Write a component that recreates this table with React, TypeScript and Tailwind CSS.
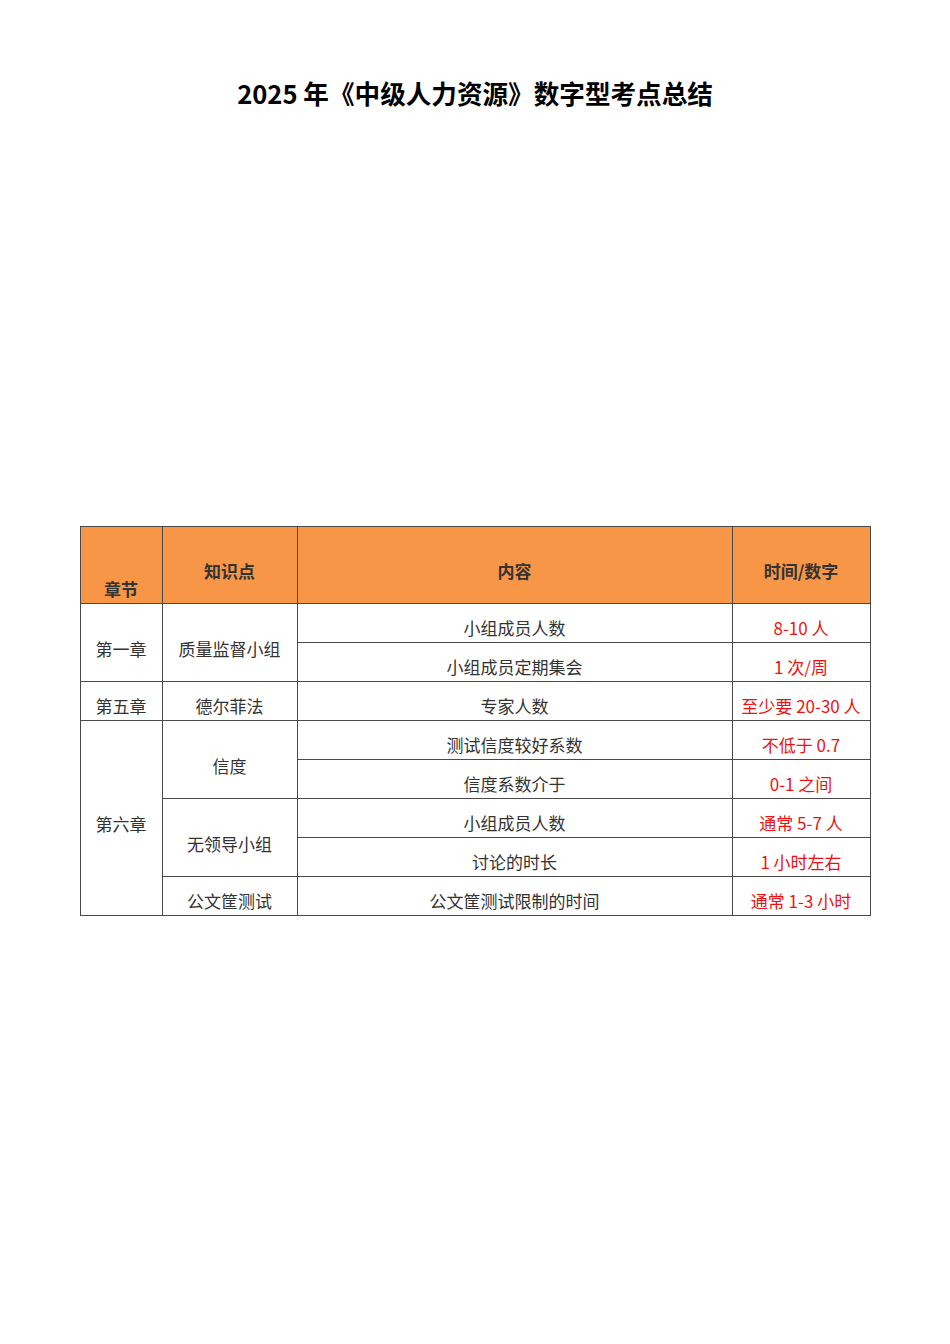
const FONT = { fontFamily: '"Noto Sans CJK SC", "Noto Sans", sans-serif' };

type Row = {
  chapter?: { text: string; span: number };
  point?: { text: string; span: number };
  content: string;
  value: string;
};

const ROWS: Row[] = [
  { chapter: { text: "第一章", span: 2 }, point: { text: "质量监督小组", span: 2 }, content: "小组成员人数", value: "8-10 人" },
  { content: "小组成员定期集会", value: "1 次/周" },
  { chapter: { text: "第五章", span: 1 }, point: { text: "德尔菲法", span: 1 }, content: "专家人数", value: "至少要 20-30 人" },
  { chapter: { text: "第六章", span: 5 }, point: { text: "信度", span: 2 }, content: "测试信度较好系数", value: "不低于 0.7" },
  { content: "信度系数介于", value: "0-1 之间" },
  { point: { text: "无领导小组", span: 2 }, content: "小组成员人数", value: "通常 5-7 人" },
  { content: "讨论的时长", value: "1 小时左右" },
  { point: { text: "公文筐测试", span: 1 }, content: "公文筐测试限制的时间", value: "通常 1-3 小时" },
];

function spanCell(text: string, span: number) {
  // single rows sit on the bottom, merged ones sit a bit under the middle
  if (span === 1) {
    return (
      <td className="border border-[#4a4a4a] text-center align-bottom pb-[3px] leading-[22px] whitespace-nowrap">
        {text}
      </td>
    );
  }
  return (
    <td rowSpan={span} className="border border-[#4a4a4a] text-center align-middle pt-[12px] leading-[22px] whitespace-nowrap">
      {text}
    </td>
  );
}

export default function App() {
  return (
    <div className="w-[950px] h-[1344px] bg-white" style={FONT}>
      <h1 className="pt-[76px] text-center text-[25.6px] leading-[34px] font-bold text-black">
        2025 年《中级人力资源》数字型考点总结
      </h1>

      <div className="mt-[416px] flex justify-center">
        <table className="w-[790px] border-collapse table-fixed text-[17px] text-[#333]">
          <colgroup>
            <col className="w-[82px]" />
            <col className="w-[135px]" />
            <col className="w-[435px]" />
            <col className="w-[138px]" />
          </colgroup>
          <thead>
            <tr className="h-[77px] bg-[#f79646] font-bold text-[#333]">
              <th className="border border-[#4a4a4a] align-bottom pb-[3px] leading-[22px]">章节</th>
              <th className="border border-[#4a4a4a] align-middle pt-[12px] leading-[22px]">知识点</th>
              <th className="border border-[#4a4a4a] align-middle pt-[12px] leading-[22px]">内容</th>
              <th className="border border-[#4a4a4a] align-middle pt-[12px] leading-[22px]">时间/数字</th>
            </tr>
          </thead>
          <tbody>
            {ROWS.map((row, i) => (
              <tr key={i} className="h-[39px]">
                {row.chapter && spanCell(row.chapter.text, row.chapter.span)}
                {row.point && spanCell(row.point.text, row.point.span)}
                <td className="border border-[#4a4a4a] text-center align-bottom pb-[3px] leading-[22px]">
                  {row.content}
                </td>
                <td className="border border-[#4a4a4a] text-center align-bottom pb-[3px] leading-[22px] text-[#ee1111] whitespace-nowrap">
                  {row.value}
                </td>
              </tr>
            ))}
          </tbody>
        </table>
      </div>
    </div>
  );
}
